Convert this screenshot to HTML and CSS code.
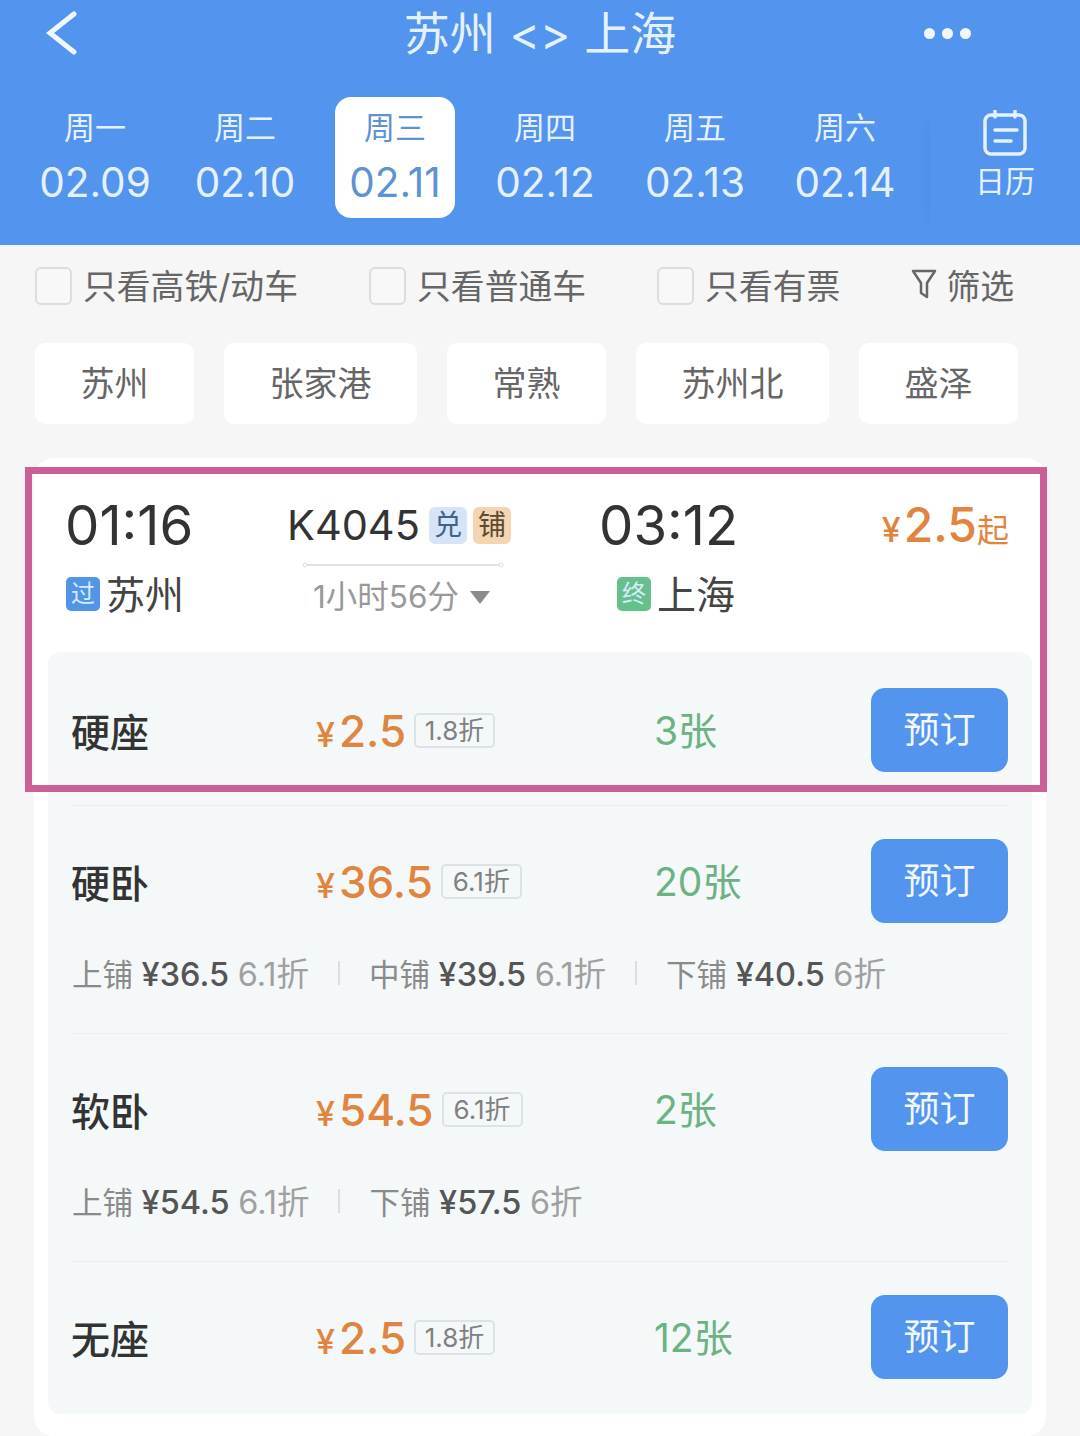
FILE: index.html
```html
<!DOCTYPE html>
<html>
  <head>
    <title>苏州 - 上海</title>
    <link rel="stylesheet" href="styles.css">
  </head>
  <body>
    <div class="header">
      <div class="titlebar">
        <svg class="back" width="32" height="44" viewBox="0 0 32 44"><path d="M28 3 L4 22 L28 41" /></svg>
        <div class="title">苏州 &lt;&gt; 上海</div>
        <div class="dots"><i></i><i></i><i></i></div>
      </div>
      <div class="dates">
        <div class="day"><span class="week">周一</span><span class="date">02.09</span></div>
        <div class="day"><span class="week">周二</span><span class="date">02.10</span></div>
        <div class="day active"><span class="week">周三</span><span class="date">02.11</span></div>
        <div class="day"><span class="week">周四</span><span class="date">02.12</span></div>
        <div class="day"><span class="week">周五</span><span class="date">02.13</span></div>
        <div class="day"><span class="week">周六</span><span class="date">02.14</span></div>
        <div class="calendar">
          <svg width="44" height="46" viewBox="0 0 44 46">
            <rect x="2" y="5" width="40" height="39" rx="6" />
            <path d="M12 1 V7 M32 1 V7 M12 20 H34 M12 31 H28" />
          </svg>
          <span>日历</span>
        </div>
      </div>
    </div>

    <div class="filters">
      <div class="check"><i></i>只看高铁/动车</div>
      <div class="check"><i></i>只看普通车</div>
      <div class="check"><i></i>只看有票</div>
      <div class="filter">
        <svg width="26" height="30" viewBox="0 0 26 30"><path d="M2 2 H24 L16 14 V28 L10 24 V14 Z" /></svg>
        筛选
      </div>
    </div>

    <div class="chips">
      <div class="chip">苏州</div>
      <div class="chip">张家港</div>
      <div class="chip">常熟</div>
      <div class="chip">苏州北</div>
      <div class="chip">盛泽</div>
    </div>

    <div class="card">
      <div class="train">
        <div class="col-from">
          <div class="time">01:16</div>
          <div class="station"><span class="badge pass">过</span>苏州</div>
        </div>
        <div class="col-mid">
          <div class="number">K4045<span class="tag blue">兑</span><span class="tag orange">铺</span></div>
          <svg class="line" width="202" height="6" viewBox="0 0 202 6">
            <path d="M4 3 H198" />
            <circle cx="3" cy="3" r="2" />
            <circle cx="199" cy="3" r="2" />
          </svg>
          <div class="duration">1小时56分<i class="arrow"></i></div>
        </div>
        <div class="col-to">
          <div class="time">03:12</div>
          <div class="station"><span class="badge end">终</span>上海</div>
        </div>
        <div class="col-price">
          <span class="yen">¥</span><span class="big">2.5</span><span class="from">起</span>
        </div>
      </div>

      <div class="seats">
        <div class="seat">
          <div class="row">
            <div class="name">硬座</div>
            <div class="price"><span class="yen">¥</span><span class="num">2.5</span><span class="off">1.8折</span></div>
            <div class="left">3张</div>
            <div class="book">预订</div>
          </div>
        </div>
        <div class="seat">
          <div class="row">
            <div class="name">硬卧</div>
            <div class="price"><span class="yen">¥</span><span class="num">36.5</span><span class="off">6.1折</span></div>
            <div class="left">20张</div>
            <div class="book">预订</div>
          </div>
          <div class="berths">
            <span>上铺 <b>¥36.5</b> <em>6.1折</em></span><i></i>
            <span>中铺 <b>¥39.5</b> <em>6.1折</em></span><i></i>
            <span>下铺 <b>¥40.5</b> <em>6折</em></span>
          </div>
        </div>
        <div class="seat">
          <div class="row">
            <div class="name">软卧</div>
            <div class="price"><span class="yen">¥</span><span class="num">54.5</span><span class="off">6.1折</span></div>
            <div class="left">2张</div>
            <div class="book">预订</div>
          </div>
          <div class="berths">
            <span>上铺 <b>¥54.5</b> <em>6.1折</em></span><i></i>
            <span>下铺 <b>¥57.5</b> <em>6折</em></span>
          </div>
        </div>
        <div class="seat">
          <div class="row">
            <div class="name">无座</div>
            <div class="price"><span class="yen">¥</span><span class="num">2.5</span><span class="off">1.8折</span></div>
            <div class="left">12张</div>
            <div class="book">预订</div>
          </div>
        </div>
      </div>

      <div class="highlight"></div>
    </div>
  </body>
</html>
```

FILE: styles.css
```css
* {
  box-sizing: border-box;
}

html, body {
  margin: 0;
  height: 1436px;
  overflow: hidden;
}

body {
  width: 1080px;
  background-color: #f6f6f6;
  font-family: Inter, "Noto Sans CJK SC", sans-serif;
  color: #333;
}

i, em {
  font-style: normal;
}

/* header */
.header {
  height: 245px;
  background-color: #5294ee;
  color: #e6f1ff;
}

.titlebar {
  display: grid;
  grid-template-columns: 1fr auto 1fr;
  align-items: center;
  height: 66px;
  padding: 0 46px;
  margin-bottom: 31px;
}

.back path {
  fill: none;
  stroke: #f2f7ff;
  stroke-width: 5;
  stroke-linecap: round;
}

.title {
  font-size: 46px;
  font-weight: 400;
  line-height: 66px;
  word-spacing: 1px;
}

.dots {
  display: flex;
  justify-content: flex-end;
  gap: 7px;
  padding-right: 63px;
}

.dots i {
  width: 11px;
  height: 11px;
  border-radius: 50%;
  background-color: #f2f7ff;
}

.dates {
  display: flex;
  padding-left: 20px;
}

.day {
  display: flex;
  flex-direction: column;
  align-items: center;
  width: 150px;
  height: 121px;
}

.day.active {
  position: relative;
  width: 120px;
  margin: 0 15px;
  border-radius: 16px;
  background-color: #fff;
  color: #5f92d0;
}

.week {
  margin-top: 9px;
  font-size: 31px;
  font-weight: 400;
  line-height: 44px;
}

.date {
  margin-top: 4px;
  font-size: 40.5px;
  line-height: 58px;
}

.calendar {
  display: flex;
  flex-direction: column;
  align-items: center;
  width: 150px;
  height: 118px;
  margin-left: 10px;
  margin-top: 13px;
  box-shadow: -10px 0 12px -10px rgba(0, 40, 120, 0.06);
}

.calendar svg {
  fill: none;
  stroke: #e6f1ff;
  stroke-width: 3.5;
  stroke-linecap: round;
}

.calendar span {
  margin-top: 4px;
  font-size: 30px;
  font-weight: 400;
  line-height: 42px;
}

/* filter row */
.filters {
  display: flex;
  justify-content: space-between;
  align-items: center;
  height: 82px;
  padding: 0 66px 0 35px;
  font-size: 33.8px;
  font-weight: 400;
  color: #666;
}

.check, .filter {
  display: flex;
  align-items: center;
  padding-bottom: 4px;
}

.check i {
  width: 37px;
  height: 38px;
  margin: 4px 11px 0 0;
  border: 2px solid #ddd;
  border-radius: 6px;
  background-color: #f8f8f8;
}

.filter svg {
  margin-right: 9px;
  fill: none;
  stroke: #666;
  stroke-width: 2.5;
  stroke-linejoin: round;
}

.chips {
  display: flex;
  gap: 30px;
  padding-left: 35px;
  margin-top: 16px;
}

.chip {
  height: 81px;
  padding: 0 45.5px;
  border-radius: 10px;
  background-color: #fff;
  font-size: 34px;
  font-weight: 400;
  line-height: 81px;
  color: #666;
}

/* train card */
.card {
  position: relative;
  width: 1012px;
  height: 978px;
  margin: 34px 0 0 34px;
  padding: 0 14px 22px;
  border-radius: 20px;
  background-color: #fff;
}

.train {
  display: flex;
  height: 194px;
  padding: 39px 23px 0 19px;
}

.col-from {
  width: 221px;
}

.col-mid {
  width: 313px;
}

.col-to {
  flex: 1;
}

.time {
  height: 56px;
  margin-left: -2px;
  font-size: 54.5px;
  line-height: 56px;
  color: #333;
}

.station {
  display: flex;
  align-items: center;
  height: 56px;
  margin-top: 11px;
  font-size: 39px;
  font-weight: 400;
  color: #444;
}

.col-from .station {
  margin-left: -1px;
}

.badge {
  width: 34px;
  height: 34px;
  margin: 4px 6px 0 0;
  border-radius: 5px;
  font-size: 24px;
  line-height: 33px;
  text-align: center;
  color: #d6ecff;
}

.pass {
  background-color: #5294e6;
}

.end {
  background-color: #65c08c;
}

.col-to .station {
  padding-left: 16px;
}

.number {
  display: flex;
  align-items: center;
  height: 56px;
  margin-left: -1px;
  font-size: 41.5px;
  color: #333;
}

.tag {
  width: 38px;
  height: 37px;
  margin-left: 6px;
  border-radius: 6px;
  font-size: 28px;
  line-height: 36px;
  text-align: center;
}

.number .tag:first-of-type {
  margin-left: 9px;
}

.blue {
  background-color: #d5e4f6;
  color: #3f6388;
}

.orange {
  background-color: #f3d5b2;
  color: #5e4a33;
}

.line {
  display: block;
  margin: 9px 0 0 14px;
}

.line path {
  stroke: #e2e2e2;
  stroke-width: 2;
}

.line circle {
  fill: #fff;
  stroke: #ddd;
  stroke-width: 1;
}

.duration {
  display: flex;
  align-items: center;
  height: 50px;
  margin-left: 25px;
  padding-top: 2px;
  font-size: 31.5px;
  font-weight: 400;
  color: #999;
}

.arrow {
  width: 0;
  height: 0;
  margin: 6px 0 0 11px;
  border-style: solid;
  border-width: 13px 10.5px 0;
  border-color: #8c8c8c transparent transparent;
}

.col-price {
  color: #e0853f;
  line-height: 56px;
  height: 56px;
  white-space: nowrap;
}

.col-price .yen {
  margin-right: 3px;
  font-size: 34px;
  font-weight: 500;
}

.big {
  font-size: 48px;
  font-weight: 500;
}

.from {
  font-size: 32px;
}

/* seats */
.seats {
  height: 762px;
  padding: 0 24px;
  border-radius: 12px;
  background-color: #f4f8f9;
}

.seat {
  padding: 33px 0;
  border-bottom: 1px solid #eaeeef;
}

.seat:first-child {
  padding-top: 36px;
}

.seat:last-child {
  border-bottom: 0;
}

.row {
  display: grid;
  grid-template-columns: 244px 338px 1fr 137px;
  align-items: center;
  height: 84px;
}

.name {
  margin-left: -1px;
  font-size: 39px;
  font-weight: 500;
  color: #333;
}

.price {
  display: flex;
  align-items: baseline;
  padding-top: 2px;
  color: #e0853f;
}

.price .yen {
  margin-right: 4px;
  font-size: 34px;
  font-weight: 500;
}

.num {
  font-size: 44px;
  font-weight: 500;
}

.off {
  align-self: center;
  width: 81px;
  height: 35px;
  margin: -2px 0 0 8px;
  border: 2px solid #dde2e6;
  border-radius: 5px;
  font-size: 26px;
  line-height: 31px;
  text-align: center;
  color: #808080;
  white-space: nowrap;
}

.left {
  padding-bottom: 4px;
  font-size: 39px;
  font-weight: 400;
  color: #6cb283;
}

.book {
  height: 84px;
  border-radius: 14px;
  background-color: #5294ee;
  font-size: 36px;
  line-height: 84px;
  text-align: center;
  color: #f2f8ff;
}

.berths {
  display: flex;
  align-items: center;
  height: 44px;
  margin: 26px 0 7px;
  font-size: 30.5px;
  font-weight: 400;
  color: #8a8a8a;
  white-space: nowrap;
}

.berths b {
  font-size: 32.5px;
  font-weight: 500;
  color: #555;
}

.berths em {
  font-size: 32.5px;
  color: #a0a0a0;
}

.berths i {
  width: 2px;
  height: 24px;
  margin: 4px 29px 0;
  background-color: #dcdfe0;
}

/* pink frame drawn on top of the screenshot */
.highlight {
  position: absolute;
  left: -9px;
  top: 9px;
  width: 1022px;
  height: 325px;
  border: 7px solid #cb6098;
  pointer-events: none;
}
```
